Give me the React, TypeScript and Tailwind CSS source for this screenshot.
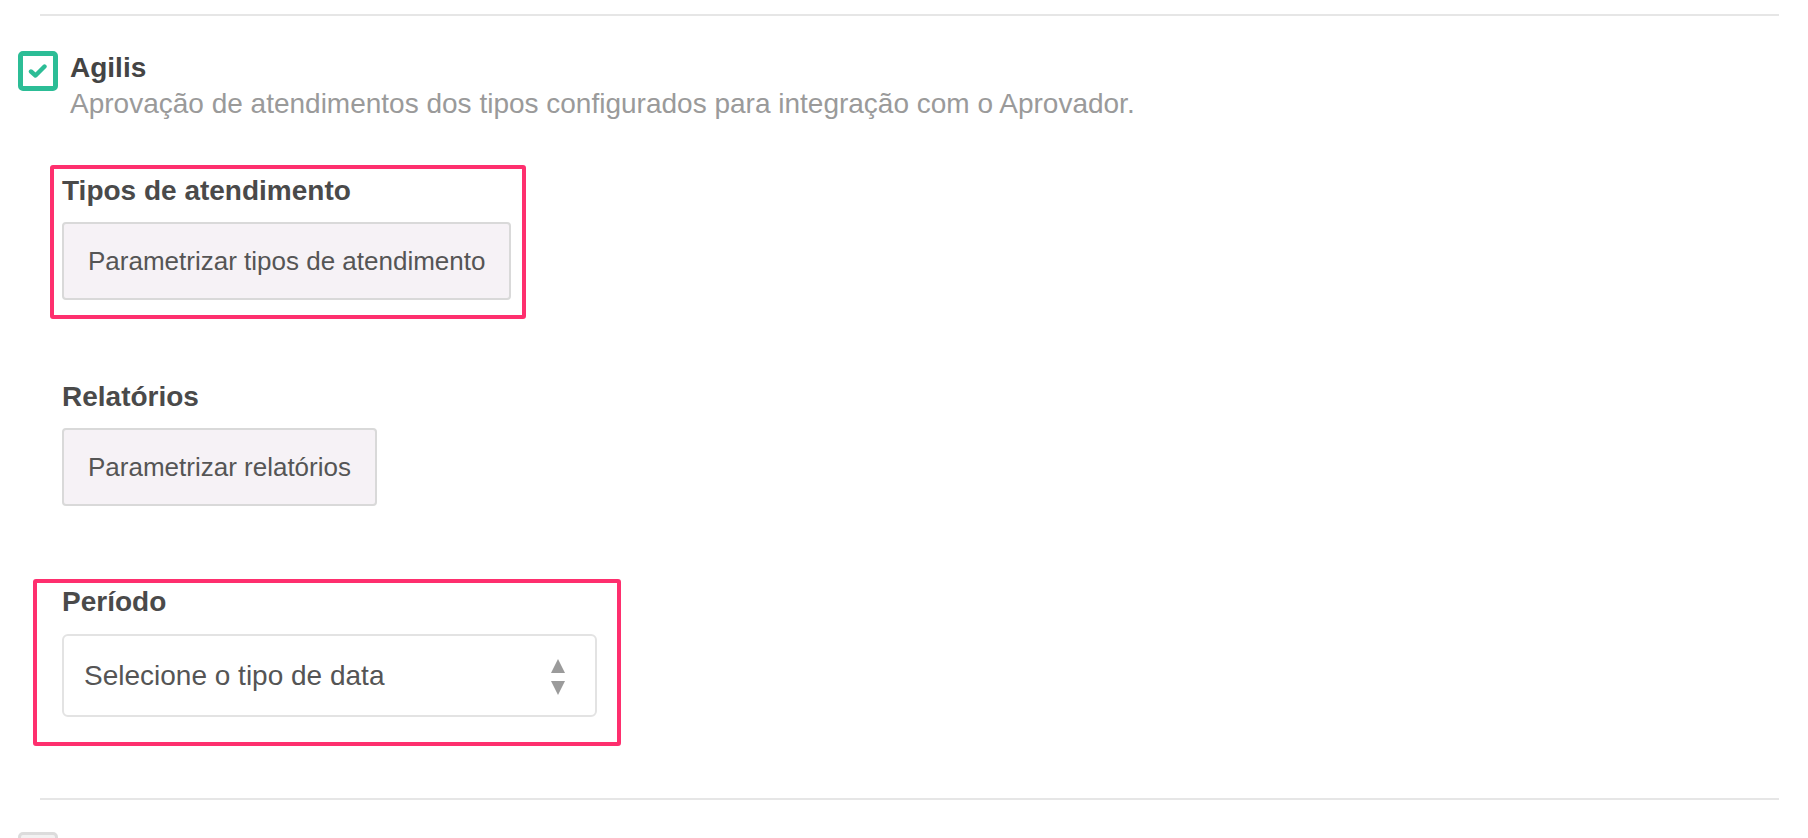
import { useState } from "react";

function CheckBox({ checked }: { checked: boolean }) {
  return (
    <div
      className={
        checked
          ? "flex h-[40px] w-[40px] shrink-0 items-center justify-center rounded-[5px] border-[5px] border-[#2cbd96] bg-white"
          : "flex h-[40px] w-[40px] shrink-0 items-center justify-center rounded-[5px] border-[3px] border-[#dcdcdc] bg-[#f2f2f2]"
      }
    >
      {checked && (
        <svg width="20" height="16" viewBox="0 0 20 16" fill="none">
          <path
            d="M3 8.5 L7.5 12.5 L16.5 3.5"
            stroke="#2cbd96"
            strokeWidth="4.4"
            strokeLinecap="round"
            strokeLinejoin="round"
          />
        </svg>
      )}
    </div>
  );
}

function ActionButton({ label }: { label: string }) {
  return (
    <button className="inline-flex h-[78px] items-center rounded-[4px] border-2 border-[#d9d9d9] bg-[#f6f2f6] px-[24px] text-[26px] text-[#555]">
      {label}
    </button>
  );
}

function FieldLabel({ text }: { text: string }) {
  return <div className="text-[28px] font-bold leading-[34px] text-[#4a4a4a]">{text}</div>;
}

export default function App() {
  const [agilis] = useState(true);

  return (
    <div className="h-[838px] w-full overflow-hidden bg-white font-['Liberation_Sans',Arial,sans-serif]">
      <div className="pt-[14px]">
        <div className="ml-[40px] mr-[29px] h-[2px] bg-[#e6e6e6]" />

        <div className="mt-[34px] flex pl-[18px]">
          <div className="mt-[1px]">
            <CheckBox checked={agilis} />
          </div>
          <div className="ml-[12px]">
            <div className="text-[28px] font-bold leading-[36px] text-[#444]">Agilis</div>
            <div className="text-[28px] leading-[36px] text-[#9a9a9a]">
              Aprovação de atendimentos dos tipos configurados para integração com o Aprovador.
            </div>
          </div>
        </div>

        {/* tipos de atendimento */}
        <div className="ml-[50px] mt-[43px] w-[476px] rounded-[3px] border-4 border-[#fe2f6e] pb-[15px] pl-[8px] pt-[5px]">
          <FieldLabel text="Tipos de atendimento" />
          <div className="mt-[14px]">
            <ActionButton label="Parametrizar tipos de atendimento" />
          </div>
        </div>

        {/* relatorios */}
        <div className="ml-[62px] mt-[61px]">
          <FieldLabel text="Relatórios" />
          <div className="mt-[14px] h-[77px]">
            <ActionButton label="Parametrizar relatórios" />
          </div>
        </div>

        {/* periodo */}
        <div className="ml-[33px] mt-[74px] w-[588px] rounded-[3px] border-4 border-[#fe2f6e] pb-[25px] pl-[25px] pt-[2px]">
          <FieldLabel text="Período" />
          <div className="mt-[15px] flex h-[83px] w-[535px] items-center justify-between rounded-[6px] border-2 border-[#e3e3e3] bg-white pl-[20px] pr-[30px]">
            <span className="text-[28px] text-[#555]">Selecione o tipo de data</span>
            <svg className="mt-[3px]" width="14" height="36" viewBox="0 0 14 36">
              <path d="M7 0 L14 14 L0 14 Z" fill="#9b9b9b" />
              <path d="M0 22 L14 22 L7 36 Z" fill="#9b9b9b" />
            </svg>
          </div>
        </div>

        <div className="ml-[40px] mr-[29px] mt-[52px] h-[2px] bg-[#e6e6e6]" />

        <div className="mt-[32px] flex pl-[18px]">
          <CheckBox checked={false} />
        </div>
      </div>
    </div>
  );
}
